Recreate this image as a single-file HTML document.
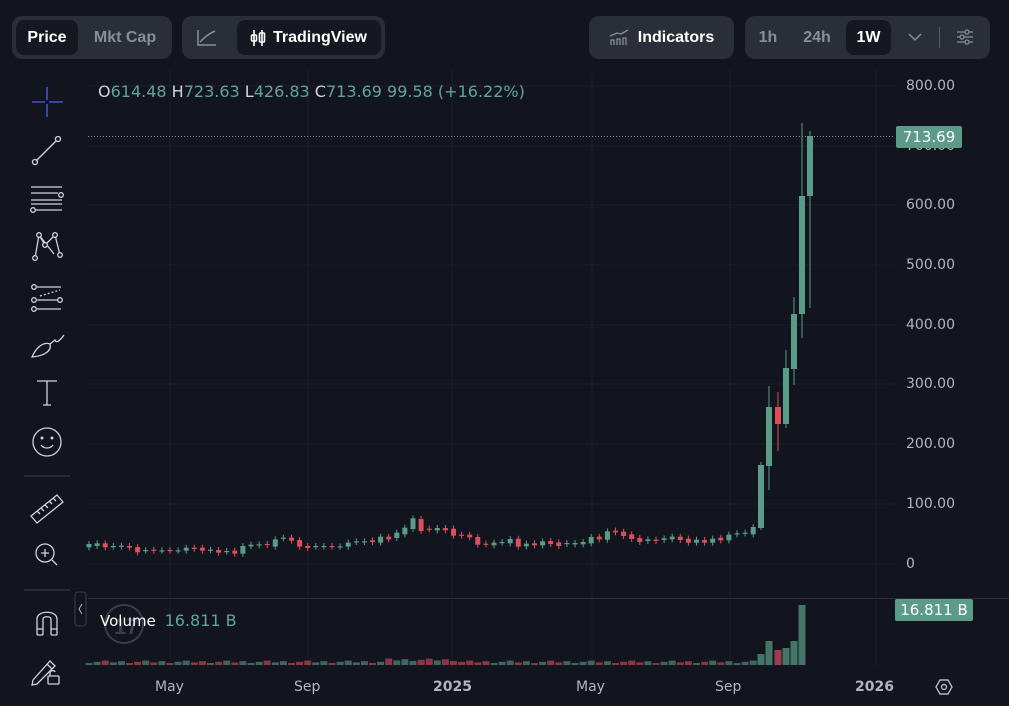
<!DOCTYPE html>
<html><head><meta charset="utf-8"><style>
*{margin:0;padding:0;box-sizing:border-box}
body{width:1009px;height:706px;background:#12151e;font-family:"Liberation Sans",sans-serif;overflow:hidden;position:relative;color:#d1d4dc}
.grp{position:absolute;top:16px;height:43px;background:#2a2e39;border-radius:10px}
.btn{position:absolute;top:4px;height:35px;border-radius:8px;font-weight:bold;font-size:16px;line-height:35px;text-align:center;color:#8a8e99}
.sel{background:#151821;color:#fff}
.ax{position:absolute;left:906px;font-size:14px;color:#b2b5be;font-family:"DejaVu Sans",sans-serif}
.bx{position:absolute;top:679px;font-size:14px;color:#b2b5be;font-family:"DejaVu Sans",sans-serif}
</style></head><body>
<div class="grp" style="left:12px;width:160px">
 <div class="btn sel" style="left:4px;width:62px">Price</div>
 <div class="btn" style="left:70px;width:86px">Mkt Cap</div>
</div>
<div class="grp" style="left:182px;width:203px">
 <svg style="position:absolute;left:15px;top:13px" width="20" height="17" viewBox="0 0 20 17" fill="none" stroke="#8a8e99" stroke-width="1.5"><path d="M1 1V16H19M3 13C7 9 11 5 18 2"/></svg>
 <div class="btn sel" style="left:55px;width:144px;color:#fff;text-align:left;padding-left:36px">TradingView</div>
 <svg style="position:absolute;left:67px;top:13px" width="18" height="18" viewBox="0 0 18 18" fill="none" stroke="#fff" stroke-width="1.6"><path d="M5 1V17M13 1V17"/><rect x="2.5" y="6" width="5" height="6" rx="1"/><rect x="10.5" y="4" width="5" height="9" rx="1"/></svg>
</div>
<div class="grp" style="left:589px;width:145px">
 <svg style="position:absolute;left:20px;top:13px" width="20" height="17" viewBox="0 0 20 17" fill="none" stroke="#8a8e99" stroke-width="1.3"><path d="M1 7L8 4L12 5L19 1M2 16V11H5V16M8 16V10H11V16M14 16V9H17V16"/></svg>
 <div class="btn" style="left:42px;width:90px;color:#fff">Indicators</div>
</div>
<div class="grp" style="left:745px;width:245px">
 <div class="btn" style="left:8px;width:30px">1h</div>
 <div class="btn" style="left:52px;width:40px">24h</div>
 <div class="btn sel" style="left:101px;width:45px">1W</div>
 <svg style="position:absolute;left:163px;top:17px" width="14" height="9" viewBox="0 0 14 9" fill="none" stroke="#8a8e99" stroke-width="1.5"><path d="M1 1L7 7L13 1"/></svg>
 <div style="position:absolute;left:194px;top:11px;width:1px;height:21px;background:#555a66"></div>
 <svg style="position:absolute;left:211px;top:12px" width="18" height="18" viewBox="0 0 18 18" fill="none" stroke="#8a8e99" stroke-width="1.3"><path d="M1 4H17M1 9H17M1 14H17"/><circle cx="11" cy="4" r="2" fill="#2a2e39"/><circle cx="6" cy="9" r="2" fill="#2a2e39"/><circle cx="11" cy="14" r="2" fill="#2a2e39"/></svg>
</div>

<svg style="position:absolute;left:0;top:0" width="1009" height="706" id="ch">
 <g stroke="#1c202b" stroke-width="1">
  <path d="M88 86H895M88 146H895M88 205H895M88 265H895M88 325H895M88 384H895M88 444H895M88 504H895M88 564H895"/>
  <path d="M170 70V598M308 70V598M452 70V598M592 70V598M730 70V598M876 70V598M170 600V668M308 600V668M452 600V668M592 600V668M730 600V668M876 600V668"/>
 </g>
 <path d="M88 598.5H1009" stroke="#2a2e39"/>
 <path d="M88 136.5H895" stroke="#8a8e99" stroke-dasharray="1 2"/>
 <g stroke="#3a3e4a"><path d="M24 476H70M24 590H70"/></g>
 <g id="c"></g>
 <g fill="none" stroke="#d1d4dc" stroke-width="1.3">
  <path d="M47 87V100M47 104V117M32 102H45M49 102H63" stroke="#3d56c7" stroke-width="1.6"/>
  <path d="M36 161L56 141"/><circle cx="35" cy="162" r="2.5"/><circle cx="58" cy="139" r="2.5"/>
  <path d="M31 187H62M31 193H58M31 200H62M35 210H62M31 204H62" stroke-width="1.2"/><circle cx="61" cy="195" r="2.3" fill="#12151e"/><circle cx="33" cy="210" r="2.3" fill="#12151e"/>
  <path d="M35 258L39 235L45 245L55 235L60 255M39 235L54 254"/><circle cx="39" cy="235" r="2.3" fill="#12151e"/><circle cx="55" cy="235" r="2.3" fill="#12151e"/><circle cx="45" cy="245" r="2.3" fill="#12151e"/><circle cx="35" cy="258" r="2.3" fill="#12151e"/><circle cx="60" cy="255" r="2.3" fill="#12151e"/>
  <path d="M37 287H61M37 300H61M37 309H61"/><path d="M40 296L60 290" stroke-dasharray="2 2"/><circle cx="34" cy="287" r="2.3" fill="#12151e"/><circle cx="34" cy="300" r="2.3" fill="#12151e"/><circle cx="60" cy="300" r="2.3" fill="#12151e"/><circle cx="34" cy="309" r="2.3" fill="#12151e"/>
  <path d="M32 357C35 350 42 341 50 344C52 351 44 356 32 357ZM50 344L55 340C56 343 59 342 64 335"/>
  <path d="M37 381H57M47 381V405M43 405H51"/>
  <circle cx="47" cy="442" r="14"/><path d="M41 445C44 449 50 449 53 445"/><circle cx="42" cy="438" r="0.8"/><circle cx="52" cy="438" r="0.8"/>
  <path d="M31 516L57 495L63 502L37 523Z M37 511L40 514M41 508L44 511M45 505L48 508M49 501L52 504M53 498L56 501"/>
  <circle cx="45" cy="553" r="9"/><path d="M41 553H49M45 549V557M52 560L57 565"/>
  <path d="M37 635V619C37 610 57 610 57 619V635M37 629H43M51 629H57M43 635V619C43 616 51 616 51 619V635M37 635H43M51 635H57"/>
  <path d="M33 680L50 661L55 666L37 684L32 685ZM47 664L52 669"/><rect x="48" y="676" width="11" height="8" rx="1"/><path d="M50 676V673C50 670 55 670 55 672"/>
 </g>
 <rect x="75" y="592" width="11" height="34" rx="3" fill="none" stroke="#3a3e4a"/>
 <path d="M82 604L79 609L82 614" stroke="#b2b5be" fill="none"/>
 <circle cx="124" cy="624" r="19" fill="none" stroke="#3a3e4a" stroke-width="2"/>
 <text x="114" y="634" font-size="22" font-weight="bold" fill="#3a3e4a" font-family="Liberation Sans">17</text>
 <path d="M936 687L940 680H948L952 687L948 694H940Z" fill="none" stroke="#b2b5be" stroke-width="1.4"/><circle cx="944" cy="687" r="2.5" fill="none" stroke="#b2b5be" stroke-width="1.4"/>
</svg>

<div style="position:absolute;left:98px;top:82px;font-size:16px;color:#5fa693;white-space:nowrap;font-family:'DejaVu Sans',sans-serif"><b style="color:#d1d4dc;font-weight:normal">O</b>614.48 <b style="color:#d1d4dc;font-weight:normal">H</b>723.63 <b style="color:#d1d4dc;font-weight:normal">L</b>426.83 <b style="color:#d1d4dc;font-weight:normal">C</b>713.69 99.58 (+16.22%)</div>
<div style="position:absolute;left:100px;top:611px;font-size:15px;color:#fff;font-family:'DejaVu Sans',sans-serif">Volume <span style="color:#5fa693;margin-left:4px;font-size:16px">16.811 B</span></div>

<div class="ax" style="top:78px">800.00</div>
<div class="ax" style="top:138px">700.00</div>
<div class="ax" style="top:197px">600.00</div>
<div class="ax" style="top:257px">500.00</div>
<div class="ax" style="top:317px">400.00</div>
<div class="ax" style="top:376px">300.00</div>
<div class="ax" style="top:436px">200.00</div>
<div class="ax" style="top:496px">100.00</div>
<div class="ax" style="top:556px">0</div>
<div style="position:absolute;left:896px;top:126px;width:66px;height:22px;background:#5b9c88;color:#fff;font-size:15px;line-height:22px;text-align:center;border-radius:2px;font-family:'DejaVu Sans',sans-serif">713.69</div>
<div style="position:absolute;left:895px;top:599px;width:78px;height:22px;background:#5b9c88;color:#fff;font-size:15px;line-height:22px;text-align:center;border-radius:2px;font-family:'DejaVu Sans',sans-serif">16.811 B</div>
<div class="bx" style="left:155px">May</div>
<div class="bx" style="left:294px">Sep</div>
<div class="bx" style="left:433px;font-weight:bold">2025</div>
<div class="bx" style="left:576px">May</div>
<div class="bx" style="left:715px">Sep</div>
<div class="bx" style="left:855px;font-weight:bold">2026</div>

<script>
var d=[["g",132,142],["g",130,138],["r",130,142],["g",138,140],["g",137,140],["r",138,143],["r",141,157],["g",150,152],["r",149,152],["g",151,152],["r",150,152],["g",151,152],["g",143,152],["r",143,147],["r",143,152],["g",149,151],["r",150,158],["g",153,155],["r",152,161],["g",138,161],["g",134,139],["g",133,136],["r",132,135],["g",118,140],["g",113,115],["r",113,122],["r",120,140],["r",138,144],["g",138,140],["g",138,140],["r",138,140],["g",139,140],["g",128,140],["g",124,126],["g",124,126],["r",121,126],["g",110,128],["r",110,118],["g",98,114],["g",83,103],["g",55,87],["r",57,93],["r",86,88],["g",84,91],["r",84,91],["r",86,107],["r",104,107],["r",104,112],["r",111,134],["r",131,133],["g",128,136],["g",126,128],["g",117,130],["r",116,140],["g",131,139],["r",130,136],["g",124,136],["r",123,132],["r",127,138],["g",129,132],["g",129,133],["g",126,133],["g",111,130],["r",110,118],["g",94,119],["r",92,97],["r",95,108],["r",103,117],["r",114,126],["g",118,123],["r",119,123],["g",115,120],["g",110,118],["r",110,120],["r",116,128],["g",119,128],["r",120,128],["g",116,128],["r",113,121],["g",104,121],["g",100,103],["g",98,100],["g",81,103]];
var s="",G="#5b9c88",R="#d9505c";
for(var i=0;i<d.length;i++){var x=89+i*8.1,a=500+d[i][1]/3,b=500+d[i][2]/3,c=d[i][0]=="g"?G:R;
s+='<line x1="'+x+'" x2="'+x+'" y1="'+(a-3)+'" y2="'+(b+3)+'" stroke="'+c+'"/>';
s+='<rect x="'+(x-2.5)+'" y="'+a+'" width="5" height="'+Math.max(1.2,b-a)+'" fill="'+c+'"/>';
var vh=2+((i*37)%5)*0.6+(i>36&&i<46?2:0);
s+='<rect x="'+(x-3.5)+'" y="'+(665-vh)+'" width="7" height="'+vh+'" fill="'+c+'" opacity="0.6"/>';}
var big=[[761,465,528,462,530,"g",11],[769,407,466,386,490,"g",24],[778,407,424,392,451,"r",15],[786,368,424,350,428,"g",17],[794,314,369,297,385,"g",24],[802,196,314,123,338,"g",60],[810,136,196,131,308,"g",0]];
for(var j=0;j<big.length;j++){var k=big[j],c=k[5]=="g"?G:R;
s+='<line x1="'+k[0]+'" x2="'+k[0]+'" y1="'+k[3]+'" y2="'+k[4]+'" stroke="'+c+'"/>';
s+='<rect x="'+(k[0]-3)+'" y="'+k[1]+'" width="6" height="'+(k[2]-k[1])+'" fill="'+c+'"/>';
if(k[6])s+='<rect x="'+(k[0]-3.5)+'" y="'+(665-k[6])+'" width="7" height="'+k[6]+'" fill="'+c+'" opacity="0.7"/>';}
document.getElementById("c").innerHTML=s;
</script>
</body></html>
